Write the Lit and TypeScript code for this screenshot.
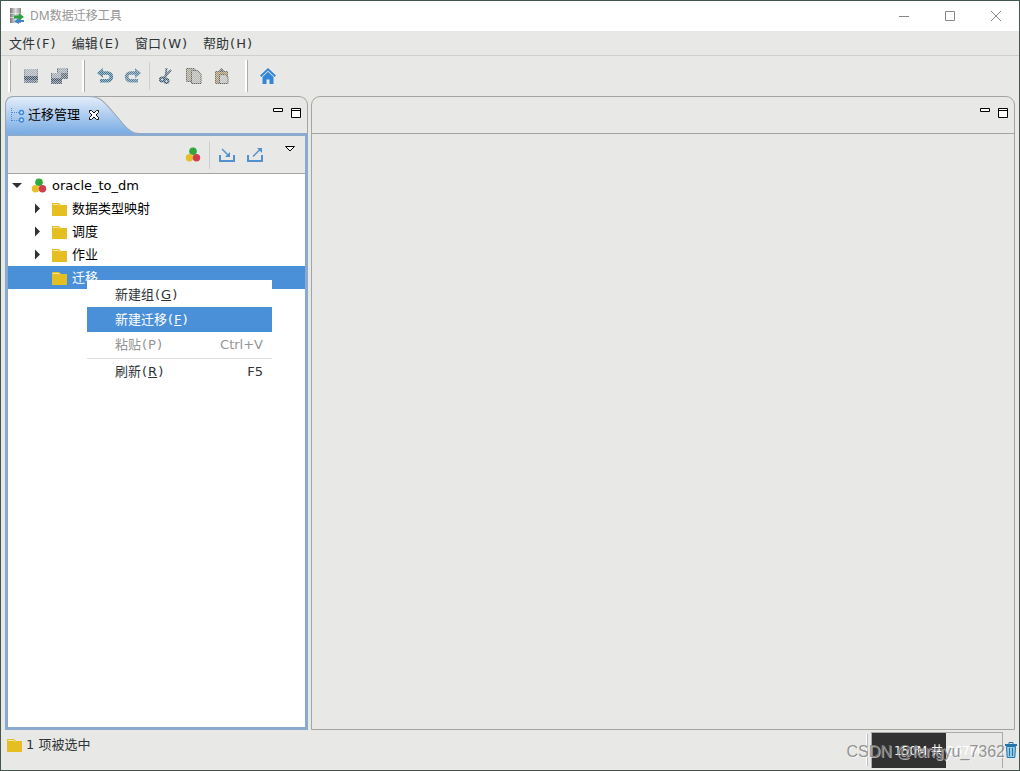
import { LitElement, html, svg, css, nothing } from "lit";
import { customElement, property, state } from "lit/decorators.js";

const dither = svg`<defs><pattern id="d" width="2" height="2" patternUnits="userSpaceOnUse"><path fill="#e8e8e6" d="M0 0h1v1H0zM1 1h1v1H1z"/></pattern></defs><path fill="url(#d)" opacity=".6" d="M-1-1h19v19H-1z"/>`;

const icons: Record<string, unknown> = {
  app: svg`<defs><linearGradient id="g"><stop offset="0" stop-color="#777"/><stop offset=".5" stop-color="#ddd"/><stop offset="1" stop-color="#888"/></linearGradient></defs>
    <path fill="url(#g)" d="M1 0h11v5H1zM1 5.500h11v4H1zM1 10h11v5H1z"/>
    <path fill="#2da13c" d="M5 7.500h5V5l5 4-5 3.500v-2H5z"/><path fill="#3c86cf" d="M15 12h-5v-2l-5 3.500 5 2.500v-2h5z"/>`,
  save: svg`<path fill="#858e99" d="M1 1h14v14H1z"/><path fill="#aab1ba" d="M2 1h12v7H2z"/><path fill="#44546a" d="M1 8h14v4H1z"/><path fill="#6d7c90" d="M3 12h10v3H3z"/>${dither}`,
  saveAll: svg`<path fill="#5c6b7e" d="M6 0h11v11H6z"/><path fill="#a3abb6" d="M7 0h9v5H7z"/><path fill="#5c6b7e" d="M0 5h11v11H0z"/><path fill="#a3abb6" d="M1 5h9v5H1z"/><path fill="#44546a" d="M0 11h11v2H0z"/>${dither}`,
  undo: svg`<path fill="none" stroke="#3f7595" stroke-width="3.600" d="M3 5h7.500a3.900 3.900 0 0 1 0 7.800H3"/><path fill="#3f7595" d="M0 5l6-5v10z"/>${dither}`,
  redo: svg`<path fill="none" stroke="#54819b" stroke-width="3.600" d="M13 5H5.500a3.900 3.900 0 0 0 0 7.800H13"/><path fill="#54819b" d="M16 5l-6-5v10z"/>${dither}`,
  cut: svg`<path fill="none" stroke="#56677a" stroke-width="2" d="M8.500 0L7.500 10M13 2L5 10.500"/><g fill="none" stroke="#36566f" stroke-width="2"><circle cx="4" cy="11.500" r="2"/><circle cx="8.500" cy="13" r="2"/></g>${dither}`,
  copy: svg`<path fill="#aca58c" stroke="#6d6e70" d="M.5.500h8l2 2v11H.5z"/><path fill="#b9b8b4" stroke="#606468" d="M5.500 2.500h6l3.500 4v9H5.500z"/>${dither}`,
  paste: svg`<path fill="#ab9569" stroke="#79715f" d="M1.500 3.500h12v12h-12z"/><path fill="#606468" d="M4 4l3.500-4L11 4z"/><path fill="#c2c2c0" stroke="#606468" d="M5.500 6.500h5.500l3 3v6H5.500z"/>${dither}`,
  home: svg`<path fill="none" stroke="#3286d8" stroke-width="2" d="M.7 8.300L8 1.300l7.300 7"/><path fill="#3286d8" d="M2.500 9L8 3.800 13.500 9v7h-4v-4.500h-3V16h-4z"/>`,
  view: svg`<path fill="none" stroke="#4a8fd6" stroke-dasharray="1 1" d="M1.500 1v14M2 5.500h7M2 13.500h7"/><g fill="#c9e0f8" stroke="#3f88d2" stroke-width="1.400"><circle cx="11.500" cy="5.500" r="2"/><circle cx="11.500" cy="13" r="2"/></g>`,
  balls: svg`<circle cx="8" cy="4.300" r="3.800" fill="#2fa83c"/><circle cx="4.500" cy="10.700" r="3.700" fill="#e5bf2a"/><circle cx="11.500" cy="10.700" r="3.700" fill="#d03d4c"/>`,
  import: svg`<path fill="none" stroke="#5291cd" stroke-width="2" d="M1 8v6h14V8"/><path fill="none" stroke="#5291cd" stroke-width="1.400" d="M3 2l7 7"/><path fill="#5291cd" d="M11 10V5l-5 5z"/>`,
  export: svg`<path fill="none" stroke="#5291cd" stroke-width="2" d="M1 8v6h14V8"/><path fill="none" stroke="#5291cd" stroke-width="1.400" d="M6 9.500l7-7"/><path fill="#5291cd" d="M15 1v5l-5-5z"/>`,
  folder: svg`<path fill="#e5bf22" d="M0 2h7l2 2h6v11H0z"/><path fill="none" stroke="#f6e7a0" d="M1 3.500h5.500l1.500 1"/>`,
  trash: svg`<path fill="none" stroke="#2476a8" d="M6 2V.5h4V2"/><path fill="#2476a8" d="M2 2h12v2H2z"/><path fill="#93cbe2" stroke="#2476a8" d="M3.500 4.500h9l-.7 11H4.200z"/><path stroke="#2476a8" d="M6.500 6v8M9.500 6v8"/>`,
  minView: svg`<path fill="#fff" stroke="#000" d="M3.500 3.500h9v3h-9z"/>`,
  maxView: svg`<path fill="#fff" stroke="#000" d="M3.500 3.500h9v9h-9zM3.500 5.500h9"/>`,
  menuDown: svg`<path fill="#fff" stroke="#000" d="M3.500 5.500h9L8 10z"/>`,
  close: svg`<path fill="#fff" stroke="#111" d="M3.500 3.500h2L8 6l2.500-2.500h2v2L10 8l2.500 2.500v2h-2L8 10l-2.500 2.500h-2v-2L6 8 3.500 5.500z"/>`,
  winMin: svg`<path stroke="#888" d="M3 8.500h10"/>`,
  winMax: svg`<path fill="none" stroke="#888" d="M3.500 3.500h9v9h-9z"/>`,
  winClose: svg`<path stroke="#888" d="M3 3l10 10M13 3L3 13"/>`,
  open: svg`<path fill="#2e3436" d="M3 5h10l-5 5z"/>`,
  closed: svg`<path fill="#2e3436" d="M6 2.500l5 5-5 5z"/>`,
};

@customElement("ui-icon")
class UiIcon extends LitElement {
  @property() name = "";
  static styles = css`
    :host { display: block; flex: none; width: 16px; height: 16px; }
    svg { display: block; width: 100%; height: 100%; overflow: visible; }
  `;
  render() {
    return html`<svg viewBox="0 0 16 16" aria-hidden="true">${icons[this.name] ?? nothing}</svg>`;
  }
}

const mnemonic = (text: string, key: string, underline = false) =>
  html`<span>${text}<span class="paren">(</span>${underline ? html`<u>${key}</u>` : key}<span class="paren">)</span></span>`;

@customElement("app-root")
class AppRoot extends LitElement {
  @state() private active = 1;

  private menus = [["文件", "F"], ["编辑", "E"], ["窗口", "W"], ["帮助", "H"]];
  private folders = ["数据类型映射", "调度", "作业"];
  private actions = [
    { text: "新建组", key: "G", hint: "" },
    { text: "新建迁移", key: "F", hint: "" },
    { text: "粘贴", key: "P", hint: "Ctrl+V", disabled: true },
    { text: "刷新", key: "R", hint: "F5" },
  ];

  static styles = css`
    :host {
      display: flex; flex-direction: column; box-sizing: border-box; min-height: 100vh;
      border: 1px solid #40584e; background: #e8e8e6; color: #2e3436; position: relative;
      font: 13px/20px "DejaVu Sans", "Noto Sans CJK SC", sans-serif;
    }
    * { box-sizing: border-box; }
    button { border: 0; padding: 0; margin: 0; background: none; color: inherit; font: inherit; }
    .paren { padding: 0 1px; }
    .title { display: flex; align-items: center; height: 30px; padding: 0 8px; background: #fff; }
    .title h1 { flex: 1; margin: 0 0 0 5px; color: #959595; font: 12px/20px "Noto Sans", "Noto Sans CJK SC", sans-serif; }
    .window { display: flex; gap: 30px; padding-right: 7px; }
    .menubar { display: flex; gap: 15px; height: 25px; padding: 2px 8px 0; border-bottom: 1px solid #cfcfcd; }
    .toolbar { display: flex; align-items: center; height: 40px; padding-left: 6px; }
    .group { display: flex; align-items: center; gap: 12px; height: 32px; padding: 0 14px 0 1px; }
    .group::before { content: ""; align-self: stretch; width: 2px; background: #fff; border-right: 1px solid #aaa; }
    .group .rule { margin: 0 -4px; }
    .rule { width: 1px; height: 28px; background: #cfcfcd; }
    .main { flex: 1; display: flex; gap: 3px; padding: 0 4px; }
    .side { flex: 0 0 303px; display: flex; flex-direction: column; }
    .head { display: flex; height: 37px; border: 1px solid #a5a59f; border-radius: 9px 9px 0 0; }
    .side .head { border-bottom: 0; }
    .tab { position: relative; display: flex; align-items: center; width: 134px; padding-left: 5px; color: #000; margin: -1px; }
    .tab .shape { position: absolute; inset: 0; width: 100%; height: 100%; }
    .tab > :not(.shape) { position: relative; }
    .tab span { margin: 0 6px 0 2px; }
    .views { display: flex; gap: 2px; margin: 8px 3px 0 auto; height: 16px; }
    .pane { flex: 1; display: flex; flex-direction: column; border: 3px solid #8aaacf; background: #fff; }
    .tools { display: flex; align-items: center; height: 38px; padding: 0 7px; background: #e8e8e6; border-bottom: 1px solid #a5a59f; justify-content: flex-end; }
    .tools .rule { margin: 0 9px 0 8px; }
    .tools > button:last-child { align-self: flex-start; padding-top: 5px; }
    .pair { display: flex; gap: 12px; margin-right: 19px; }
    .tree { margin: 0; padding: 0; list-style: none; color: #000; }
    .row { display: flex; align-items: center; height: 23px; padding-left: 1px; }
    .row.child { padding-left: 21px; }
    .row .pic { margin: 0 4px 0 7px; }
    .row .pic.balls { margin: 0 5px 0 6px; }
    .blank { width: 16px; }
    .selected { position: relative; background: #4a90d9; color: #fff; }
    .popup { position: absolute; left: 79px; top: 14px; width: 185px; padding-top: 2px; background: #fff; color: #2e3436; z-index: 1; }
    .item { display: flex; justify-content: space-between; align-items: center; width: 100%; height: 25px; padding: 0 9px 0 28px; }
    .item.lit { background: #4a90d9; color: #fff; }
    .item:disabled { height: 27px; color: #929595; border-bottom: 1px solid #dededc; }
    .editor { flex: 1; display: flex; flex-direction: column; border: 1px solid #a5a59f; border-radius: 9px 9px 0 0; }
    .editor .head { border-width: 0 0 1px; border-radius: 0; }
    .status { display: flex; align-items: center; height: 40px; padding-left: 6px; }
    .status p { flex: 1; margin: 0; padding: 0 0 10px 3px; }
    .status > ui-icon { margin-bottom: 10px; }
    .grip { width: 2px; height: 32px; margin-right: 3px; background: #fff; border-right: 1px solid #bbb; }
    .heap { display: flex; justify-content: center; align-items: center; width: 132px; height: 36px; font-size: 12px; color: #fff; border: solid #aaa; border-width: 1px 1px 0; background: linear-gradient(90deg, #323232 74px, #e8e8e6 74px); white-space: pre; }
    .mark { position: absolute; right: 14px; bottom: 8px; font: 16px/20px "Liberation Sans", sans-serif; color: rgba(130, 130, 130, 0.85); text-shadow: 1px 1px 0 rgba(255, 255, 255, 0.6); }
  `;

  private tool(name: string, label: string, disabled = false) {
    return html`<button aria-label=${label} ?disabled=${disabled}><ui-icon name=${name}></ui-icon></button>`;
  }

  private viewButtons() {
    return html`<div class="views">${this.tool("minView", "最小化")}${this.tool("maxView", "最大化")}</div>`;
  }

  render() {
    return html`
      <header class="title">
        <ui-icon name="app"></ui-icon><h1>DM数据迁移工具</h1>
        <div class="window">${this.tool("winMin", "最小化")}${this.tool("winMax", "最大化")}${this.tool("winClose", "关闭")}</div>
      </header>
      <nav class="menubar">${this.menus.map(([t, k]) => html`<button>${mnemonic(t, k)}</button>`)}</nav>
      <div class="toolbar">
        <div class="group">${this.tool("save", "保存", true)}${this.tool("saveAll", "全部保存", true)}</div>
        <div class="group">${this.tool("undo", "撤销", true)}${this.tool("redo", "重做", true)}
          <i class="rule"></i>${this.tool("cut", "剪切", true)}${this.tool("copy", "复制", true)}${this.tool("paste", "粘贴", true)}</div>
        <div class="group">${this.tool("home", "主页")}</div>
      </div>
      <main class="main">
        <section class="side">
          <div class="head">
            <div class="tab">
              <svg class="shape" viewBox="0 0 134 37" preserveAspectRatio="none" aria-hidden="true">
                <defs><linearGradient id="t" x2="0" y2="1"><stop offset="0" stop-color="#e4eefa"/><stop offset="1" stop-color="#78abe4"/></linearGradient></defs>
                <path fill="url(#t)" stroke="#9aa6b0" d="M.5 37V9Q.5.5 9 .5H84C95 .5 98 5 104 11L118 27Q126 36.500 134 36.500"/>
              </svg>
              <ui-icon name="view"></ui-icon><span>迁移管理</span>${this.tool("close", "关闭")}
            </div>
            ${this.viewButtons()}
          </div>
          <div class="pane">
            <div class="tools">
              ${this.tool("balls", "新建工程")}<i class="rule"></i>
              <div class="pair">${this.tool("import", "导入")}${this.tool("export", "导出")}</div>
              ${this.tool("menuDown", "视图菜单")}
            </div>
            <ul class="tree">
              <li class="row"><ui-icon name="open"></ui-icon><ui-icon class="pic balls" name="balls"></ui-icon>oracle_to_dm</li>
              ${this.folders.map((f) => html`<li class="row child"><ui-icon name="closed"></ui-icon><ui-icon class="pic" name="folder"></ui-icon>${f}</li>`)}
              <li class="row child selected"><span class="blank"></span><ui-icon class="pic" name="folder"></ui-icon>迁移
                <div class="popup" role="menu">
                  ${this.actions.map((a, i) => html`<button role="menuitem" class="item ${i === this.active ? "lit" : ""}" ?disabled=${!!a.disabled}
                    @mouseenter=${() => (this.active = i)}>${mnemonic(a.text, a.key, !a.disabled)}<span>${a.hint}</span></button>`)}
                </div>
              </li>
            </ul>
          </div>
        </section>
        <section class="editor"><div class="head">${this.viewButtons()}</div></section>
      </main>
      <footer class="status">
        <ui-icon name="folder"></ui-icon><p>1 项被选中</p>
        <i class="grip"></i><div class="heap">150M 共 267M</div>${this.tool("trash", "回收内存")}
      </footer>
      <div class="mark">CSDN @fangyu_7362</div>
    `;
  }
}
